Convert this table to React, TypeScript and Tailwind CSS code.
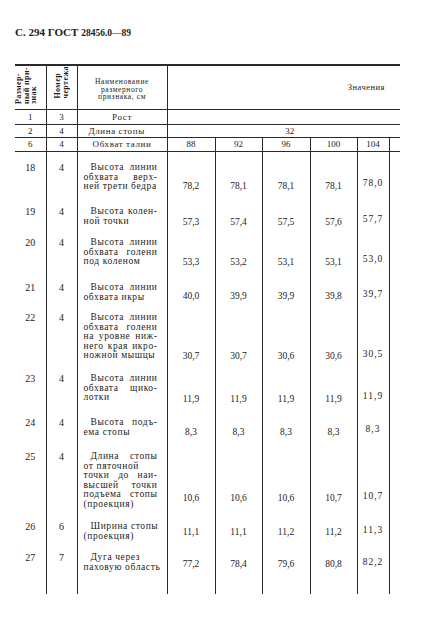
type Row = {
  n: string;
  d: string;
  lines: string[];
  v: string[];
  h: string;
  vp: string;
  vpl: string;
};

// lines that end with a forced break and are not spread to full width
const NOT_JUSTIFIED = new Set(["от пяточной", "Дуга через"]);

const ROWS: Row[] = [
  { n: "18", d: "4", lines: ["Высота линии", "обхвата верх-", "ней трети бедра"], v: ["78,2", "78,1", "78,1", "78,1", "78,0"], h: "h-[44px]", vp: "pt-[19px]", vpl: "pt-[16px]" },
  { n: "19", d: "4", lines: ["Высота колен-", "ной точки"], v: ["57,3", "57,4", "57,5", "57,6", "57,7"], h: "h-[31px]", vp: "pt-[11px]", vpl: "pt-[8px]" },
  { n: "20", d: "4", lines: ["Высота линии", "обхвата голени", "под коленом"], v: ["53,3", "53,2", "53,1", "53,1", "53,0"], h: "h-[45px]", vp: "pt-[20px]", vpl: "pt-[17px]" },
  { n: "21", d: "4", lines: ["Высота линии", "обхвата икры"], v: ["40,0", "39,9", "39,9", "39,8", "39,7"], h: "h-[30px]", vp: "pt-[9px]", vpl: "pt-[7px]" },
  { n: "22", d: "4", lines: ["Высота линии", "обхвата голени", "на уровне ниж-", "него края икро-", "ножной мышцы"], v: ["30,7", "30,7", "30,6", "30,6", "30,5"], h: "h-[61px]", vp: "pt-[39px]", vpl: "pt-[37px]" },
  { n: "23", d: "4", lines: ["Высота линии", "обхвата щико-", "лотки"], v: ["11,9", "11,9", "11,9", "11,9", "11,9"], h: "h-[44px]", vp: "pt-[21px]", vpl: "pt-[18px]" },
  { n: "24", d: "4", lines: ["Высота подъ-", "ема стопы"], v: ["8,3", "8,3", "8,3", "8,3", "8,3"], h: "h-[34px]", vp: "pt-[10px]", vpl: "pt-[7px]" },
  { n: "25", d: "4", lines: ["Длина стопы", "от пяточной", "точки до наи-", "высшей точки", "подъема стопы", "(проекция)"], v: ["10,6", "10,6", "10,6", "10,7", "10,7"], h: "h-[70px]", vp: "pt-[42px]", vpl: "pt-[40px]" },
  { n: "26", d: "6", lines: ["Ширина стопы", "(проекция)"], v: ["11,1", "11,1", "11,2", "11,2", "11,3"], h: "h-[31px]", vp: "pt-[6px]", vpl: "pt-[4px]" },
  { n: "27", d: "7", lines: ["Дуга через", "паховую область"], v: ["77,2", "78,4", "79,6", "80,8", "82,2"], h: "h-[41px]", vp: "pt-[7px]", vpl: "pt-[5px]" },
];

const HEAD_VALUES = ["88", "92", "96", "100", "104"];

const line = "border-[#2a2a2a]";

function Desc({ lines }: { lines: string[] }) {
  return (
    <div className="pl-[6px] pr-[9px] text-[9.5px] leading-[9.6px] tracking-[0.6px]">
      {lines.map((l, i) => {
        const last = i === lines.length - 1;
        const justify = !last && !NOT_JUSTIFIED.has(l);
        return (
          <div
            key={i}
            className={
              "whitespace-nowrap " +
              (i === 0 ? "pl-[7px] " : "") +
              (justify ? "text-justify [text-align-last:justify]" : "")
            }
          >
            {l}
          </div>
        );
      })}
    </div>
  );
}

export default function App() {
  return (
    <div className="w-[424px] h-[632px] bg-white pt-[25px] pl-[15px] text-[#1c1c1c] font-['Liberation_Serif',serif]">
      <div className="h-[14px] leading-[14px] font-bold text-[11px]">
        С. 294 ГОСТ <span className="text-[9.5px]">28456.0—89</span>
      </div>

      <table className="mt-[25px] table-fixed border-collapse w-[385px]">
        <colgroup>
          <col className="w-[31px]" />
          <col className="w-[31px]" />
          <col className="w-[90px]" />
          <col className="w-[48px]" />
          <col className="w-[47px]" />
          <col className="w-[48px]" />
          <col className="w-[47px]" />
          <col className="w-[32px]" />
          <col className="w-[11px]" />
        </colgroup>
        <tbody>
          {/* header */}
          <tr className="h-[43px]">
            <td className={`p-0 border-t-2 border-b border-r ${line} align-bottom pb-[5px] pr-[8px]`}>
              <div className="flex justify-center">
                <div className="[writing-mode:vertical-rl] rotate-180 text-[8px] leading-[7.5px] font-bold tracking-[0.4px]">
                  Размер-<br />ный при-<br />знак
                </div>
              </div>
            </td>
            <td className={`p-0 border-t-2 border-b border-r ${line} align-bottom pb-[10px]`}>
              <div className="flex justify-center">
                <div className="[writing-mode:vertical-rl] rotate-180 text-[8px] leading-[8px] font-bold tracking-[0.4px]">
                  Номер<br />чертежа
                </div>
              </div>
            </td>
            <td className={`p-0 pt-[4px] border-t-2 border-b border-r ${line} align-middle text-center text-[7.5px] leading-[7.5px] tracking-[0.6px]`}>
              Наименование<br />размерного<br />признака, см
            </td>
            <td colSpan={6} className={`p-0 pr-[15px] border-t-2 border-b ${line} align-middle text-right text-[8.5px] tracking-[0.5px]`}>
              Значения
            </td>
          </tr>

          <tr className="h-[15px] text-[9px] leading-[10px]">
            <td className={`p-0 border-b border-r ${line} text-center`}>1</td>
            <td className={`p-0 border-b border-r ${line} text-center`}>3</td>
            <td className={`p-0 border-b border-r ${line} text-center tracking-[0.6px]`}>Рост</td>
            <td colSpan={6} className={`p-0 border-b ${line}`}></td>
          </tr>

          <tr className="h-[13px] text-[9px] leading-[10px]">
            <td className={`p-0 border-b border-r ${line} text-center`}>2</td>
            <td className={`p-0 border-b border-r ${line} text-center`}>4</td>
            <td className={`p-0 pl-[11px] border-b border-r ${line} tracking-[0.6px]`}>Длина стопы</td>
            <td colSpan={6} className={`p-0 pl-[12px] border-b ${line} text-center`}>32</td>
          </tr>

          <tr className="h-[14px] text-[9px] leading-[10px]">
            <td className={`p-0 border-b border-r ${line} text-center`}>6</td>
            <td className={`p-0 border-b border-r ${line} text-center`}>4</td>
            <td className={`p-0 border-b border-r ${line} text-center tracking-[0.6px]`}>Обхват талии</td>
            {HEAD_VALUES.map((v) => (
              <td key={v} className={`p-0 border-b border-r ${line} text-center`}>{v}</td>
            ))}
            <td className={`p-0 border-b ${line}`}></td>
          </tr>

          {/* spacer above first data row */}
          <tr className="h-[12px]">
            {Array.from({ length: 8 }).map((_, i) => (
              <td key={i} className={`p-0 border-r ${line}`}></td>
            ))}
            <td className="p-0"></td>
          </tr>

          {ROWS.map((r) => (
            <tr key={r.n} className={r.h}>
              <td className={`p-0 border-r ${line} align-top text-center text-[10px] leading-[9.6px]`}>{r.n}</td>
              <td className={`p-0 border-r ${line} align-top text-center text-[10px] leading-[9.6px]`}>{r.d}</td>
              <td className={`p-0 border-r ${line} align-top`}>
                <Desc lines={r.lines} />
              </td>
              {r.v.map((v, i) => (
                <td
                  key={i}
                  className={`p-0 border-r ${line} align-top text-center text-[9.5px] leading-[9.6px] ${
                    i === 4 ? r.vpl + " tracking-[1px]" : r.vp
                  }`}
                >
                  {v}
                </td>
              ))}
              <td className="p-0"></td>
            </tr>
          ))}
        </tbody>
      </table>
    </div>
  );
}
